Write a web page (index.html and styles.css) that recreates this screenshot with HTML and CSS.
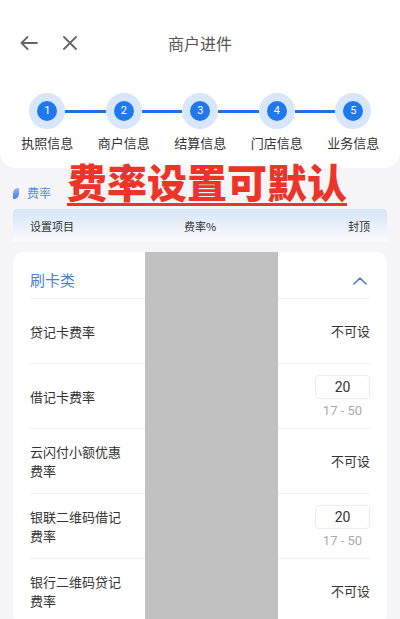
FILE: index.html
```html
<!DOCTYPE html>
<html lang="zh-CN">
<head>
<meta charset="utf-8">
<title>商户进件</title>
<link rel="stylesheet" href="styles.css">
</head>
<body>
<div class="page">
  <header class="top">
    <div class="nav">
      <div class="nav-icons">
        <svg class="ic-back" width="18" height="14" viewBox="0 0 18 14"><path d="M17 7H1.5M7.5 1L1.5 7l6 6" fill="none" stroke="#666" stroke-width="1.8" stroke-linecap="round" stroke-linejoin="round"/></svg>
        <svg class="ic-close" width="14" height="14" viewBox="0 0 14 14"><path d="M1 1l12 12M13 1L1 13" fill="none" stroke="#666" stroke-width="1.8" stroke-linecap="round"/></svg>
      </div>
      <div class="nav-title">商户进件</div>
      <div></div>
    </div>
    <ol class="steps">
      <li class="step"><span class="dot"><span class="num">1</span></span><span class="step-label">执照信息</span></li>
      <li class="step"><span class="dot"><span class="num">2</span></span><span class="step-label">商户信息</span></li>
      <li class="step"><span class="dot"><span class="num">3</span></span><span class="step-label">结算信息</span></li>
      <li class="step"><span class="dot"><span class="num">4</span></span><span class="step-label">门店信息</span></li>
      <li class="step"><span class="dot"><span class="num">5</span></span><span class="step-label">业务信息</span></li>
    </ol>
  </header>

  <div class="section-title">
    <span class="leaf"></span>
    <span class="section-text">费率</span>
  </div>

  <div class="table-head">
    <span class="th th-left">设置项目</span>
    <span class="th th-mid">费率%</span>
    <span class="th th-right">封顶</span>
  </div>

  <section class="card">
    <div class="cat">
      <span class="cat-name">刷卡类</span>
      <svg class="chev" width="14" height="8" viewBox="0 0 14 8"><path d="M1 7l6-6 6 6" fill="none" stroke="#4a7fd2" stroke-width="1.6" stroke-linecap="round" stroke-linejoin="round"/></svg>
    </div>
    <div class="row">
      <span class="row-label">贷记卡费率</span>
      <span class="na">不可设</span>
    </div>
    <div class="row">
      <span class="row-label">借记卡费率</span>
      <div class="field">
        <span class="box">20</span>
        <span class="range">17 - 50</span>
      </div>
    </div>
    <div class="row">
      <span class="row-label">云闪付小额优惠费率</span>
      <span class="na">不可设</span>
    </div>
    <div class="row">
      <span class="row-label">银联二维码借记费率</span>
      <div class="field">
        <span class="box">20</span>
        <span class="range">17 - 50</span>
      </div>
    </div>
    <div class="row">
      <span class="row-label">银行二维码贷记费率</span>
      <span class="na">不可设</span>
    </div>
  </section>

  <div class="annot">费率设置可默认</div>
  <div class="redact"></div>
</div>
</body>
</html>
```

FILE: styles.css
```css
* { box-sizing: border-box; }
html, body { margin: 0; padding: 0; }
body {
  width: 400px;
  height: 619px;
  overflow: hidden;
  background: #f5f5f7;
  font-family: "Noto Sans CJK SC", "Noto Sans", sans-serif;
  color: #333;
}
.page { position: relative; width: 400px; height: 619px; overflow: hidden; }

.top {
  background: #fff;
  border-radius: 0 0 16px 16px;
  height: 168px;
  padding-top: 24px;
}
.nav {
  height: 38px;
  display: grid;
  grid-template-columns: 1fr auto 1fr;
  align-items: center;
}
.nav-icons {
  display: flex;
  align-items: center;
  gap: 25px;
  padding-left: 20px;
}
.ic-back, .ic-close { display: block; }
.nav-title {
  font-size: 16px;
  color: #555;
  line-height: 20px;
}

.steps {
  list-style: none;
  margin: 0;
  padding: 31px 0 0 9px;
  display: grid;
  grid-template-columns: repeat(5, 76.5px);
}
.step {
  position: relative;
  display: flex;
  flex-direction: column;
  align-items: center;
}
.step:not(:last-child)::after {
  content: "";
  position: absolute;
  top: 16.5px;
  left: calc(50% + 18px);
  width: 40.5px;
  height: 3px;
  background: #1f72e6;
}
.dot {
  width: 36px;
  height: 36px;
  border-radius: 50%;
  background: #d7e6fb;
  display: flex;
  align-items: center;
  justify-content: center;
}
.num {
  width: 20px;
  height: 20px;
  border-radius: 50%;
  background: #1f78ec;
  color: #fff;
  font-family: "Roboto", "Noto Sans", sans-serif;
  font-size: 11px;
  line-height: 20px;
  text-align: center;
}
.step-label {
  margin-top: 5px;
  font-size: 13px;
  line-height: 18px;
  color: #333;
  white-space: nowrap;
}

.section-title {
  margin-top: 16px;
  height: 18px;
  display: flex;
  align-items: center;
  padding-left: 13px;
  gap: 8px;
}
.leaf {
  width: 6px;
  height: 11px;
  border-radius: 6px 1px 6px 1px;
  background: linear-gradient(180deg, #8fb4f5, #4a7fe6);
}
.section-text {
  font-size: 12px;
  line-height: 18px;
  color: #5a8de0;
}

.table-head {
  margin: 7px 13px 0;
  height: 33px;
  padding: 0 17px;
  display: grid;
  grid-template-columns: 1fr auto 1fr;
  align-items: center;
  background: linear-gradient(180deg, #d6e5f7 0%, #eaf1fa 55%, #fafbfd 100%);
  border-radius: 4px 4px 0 0;
}
.th { font-size: 11px; line-height: 16px; color: #333; }
.th-mid { text-align: center; }
.th-right { text-align: right; }

.card {
  margin: 10px 13px 0;
  background: #fff;
  border-radius: 10px;
  padding: 0 17px;
}
.cat {
  height: 47px;
  padding-top: 18px;
  display: flex;
  align-items: flex-start;
  justify-content: space-between;
  border-bottom: 1px solid #efefef;
}
.cat-name {
  font-size: 15px;
  line-height: 20px;
  color: #4a7fd2;
}
.chev { display: block; margin-top: 7px; margin-right: 3px; }

.row {
  height: 65px;
  display: flex;
  align-items: center;
  justify-content: space-between;
  border-bottom: 1px solid #efefef;
}
.row-label {
  width: 96px;
  font-size: 13px;
  line-height: 19px;
  color: #333;
}
.na { font-size: 13px; line-height: 18px; color: #333; }
.field {
  display: flex;
  flex-direction: column;
  align-items: center;
  padding-top: 2px;
}
.box {
  width: 55px;
  height: 24px;
  border: 1px solid #ececec;
  border-radius: 4px;
  text-align: center;
  font-family: "Roboto", "Noto Sans", sans-serif;
  font-size: 14px;
  line-height: 22px;
  color: #333;
}
.range {
  margin-top: 3px;
  font-family: "Roboto", "Noto Sans", sans-serif;
  font-size: 13px;
  line-height: 18px;
  color: #aaa;
}

.annot {
  position: absolute;
  left: 67px;
  top: 161px;
  font-size: 40px;
  line-height: 40px;
  font-weight: 900;
  color: #ea3528;
  padding-bottom: 2px;
  border-bottom: 3px solid #ea3528;
  letter-spacing: 0;
  white-space: nowrap;
}
.redact {
  position: absolute;
  left: 145px;
  top: 252px;
  width: 133px;
  height: 367px;
  background: #c1c1c1;
}
```
